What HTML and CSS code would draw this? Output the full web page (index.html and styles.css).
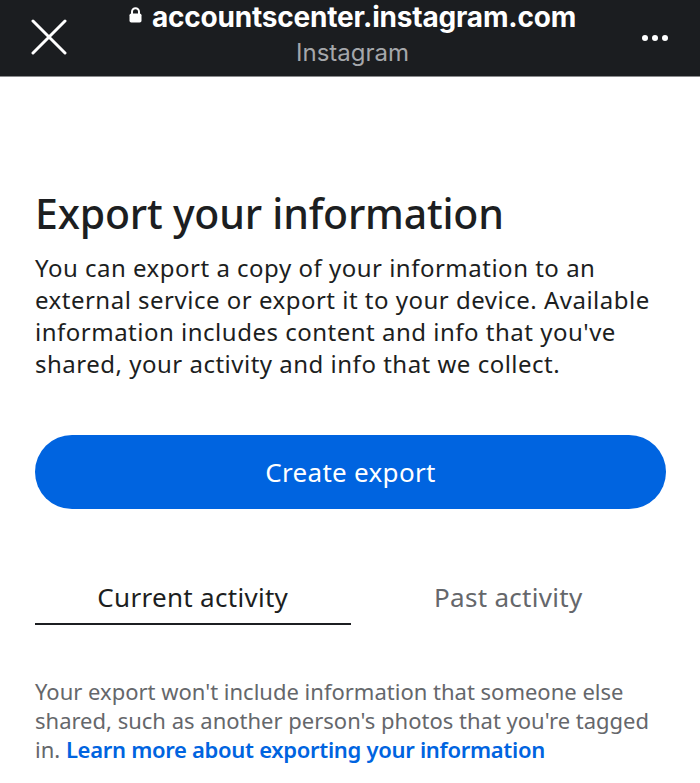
FILE: index.html
```html
<!DOCTYPE html>
<html lang="en">
<head>
  <meta charset="UTF-8" />
  <meta name="viewport" content="width=device-width, initial-scale=1.0" />
  <title>Export your information</title>
  <link rel="stylesheet" href="styles.css">
</head>
<body>
  <header class="topbar">
    <button class="close-btn" aria-label="Close">
      <svg width="36" height="36" viewBox="0 0 36 36">
        <path d="M2 2 L34 34 M34 2 L2 34" stroke="#fff" stroke-width="3" stroke-linecap="round" />
      </svg>
    </button>
    <div class="address">
      <div class="url">
        <svg class="lock" width="13" height="16" viewBox="0 0 13 16">
          <path d="M3 7 V4.8 A3.5 3.5 0 0 1 10 4.8 V7" fill="none" stroke="#fff" stroke-width="2" />
          <rect x="0.5" y="6.5" width="12" height="9" rx="1.8" fill="#fff" />
        </svg>
        <span>accountscenter.instagram.com</span>
      </div>
      <div class="site">Instagram</div>
    </div>
    <button class="more-btn" aria-label="More">
      <span></span><span></span><span></span>
    </button>
  </header>

  <main class="content">
    <h1>Export your information</h1>
    <p class="intro">You can export a copy of your information to an external service or export it to your device. Available information includes content and info that you've shared, your activity and info that we collect.</p>

    <button class="primary">Create export</button>

    <div class="tabs">
      <div class="tab active">Current activity</div>
      <div class="tab">Past activity</div>
    </div>

    <p class="note">Your export won't include information that someone else shared, such as another person's photos that you're tagged in. <a href="#">Learn more about exporting your information</a></p>
  </main>
</body>
</html>
```

FILE: styles.css
```css
:root {
  --text: #1c1e21;
  --muted: #65676b;
  --accent: #0064e0;
}

body {
  margin: 0;
  background: #fff;
  color: var(--text);
  font-family: "Noto Sans", "Liberation Sans", sans-serif;
}

.topbar {
  height: 76px;
  background: #1b1d20;
  border-bottom: 1px solid #8a8b8d;
  display: flex;
  align-items: center;
  padding: 0 24px 0 31px;
}

.topbar button {
  background: none;
  border: none;
  padding: 0;
  cursor: pointer;
}

.close-btn {
  width: 36px;
  height: 36px;
  display: flex;
  margin-top: -2px;
}

.address {
  flex: 1;
  display: flex;
  flex-direction: column;
  align-items: center;
  padding-right: 4px;
  margin-top: -9px;
}

.url {
  display: flex;
  align-items: center;
  gap: 10px;
  color: #fff;
  font-family: Inter, "Liberation Sans", sans-serif;
  font-weight: 700;
  font-size: 28px;
  line-height: 32px;
  letter-spacing: -0.2px;
}

.lock {
  margin-top: -4px;
}

.site {
  color: #a5a7ab;
  font-family: Inter, "Liberation Sans", sans-serif;
  font-size: 24px;
  line-height: 28px;
  margin-top: 6px;
}

.more-btn {
  display: flex;
  gap: 4px;
  width: 34px;
  margin-top: 0;
}

.more-btn span {
  width: 6px;
  height: 6px;
  border-radius: 50%;
  background: #fff;
}

.content {
  padding: 108px 34px 0 35px;
}

h1 {
  margin: 0;
  font-size: 41px;
  font-weight: 500;
  line-height: 56px;
  letter-spacing: -0.2px;
}

.intro {
  margin: 11px 0 0;
  font-size: 24px;
  line-height: 32px;
  letter-spacing: 0.5px;
}

.primary {
  display: block;
  width: 100%;
  height: 74px;
  margin-top: 55px;
  border: none;
  border-radius: 37px;
  background: var(--accent);
  color: #fff;
  font-family: inherit;
  font-size: 26px;
  letter-spacing: 0.3px;
  cursor: pointer;
}

.tabs {
  display: grid;
  grid-template-columns: 1fr 1fr;
  margin-top: 70px;
}

.tab {
  text-align: center;
  font-size: 26px;
  letter-spacing: 0.3px;
  padding-bottom: 8px;
  color: var(--muted);
  border-bottom: 2px solid transparent;
}

.tab.active {
  color: var(--text);
  border-bottom-color: var(--text);
}

.note {
  margin: 52px 0 0;
  font-size: 22px;
  line-height: 29px;
  color: var(--muted);
}

.note a {
  color: var(--accent);
  font-weight: 600;
  letter-spacing: -0.3px;
  text-decoration: none;
}
```
